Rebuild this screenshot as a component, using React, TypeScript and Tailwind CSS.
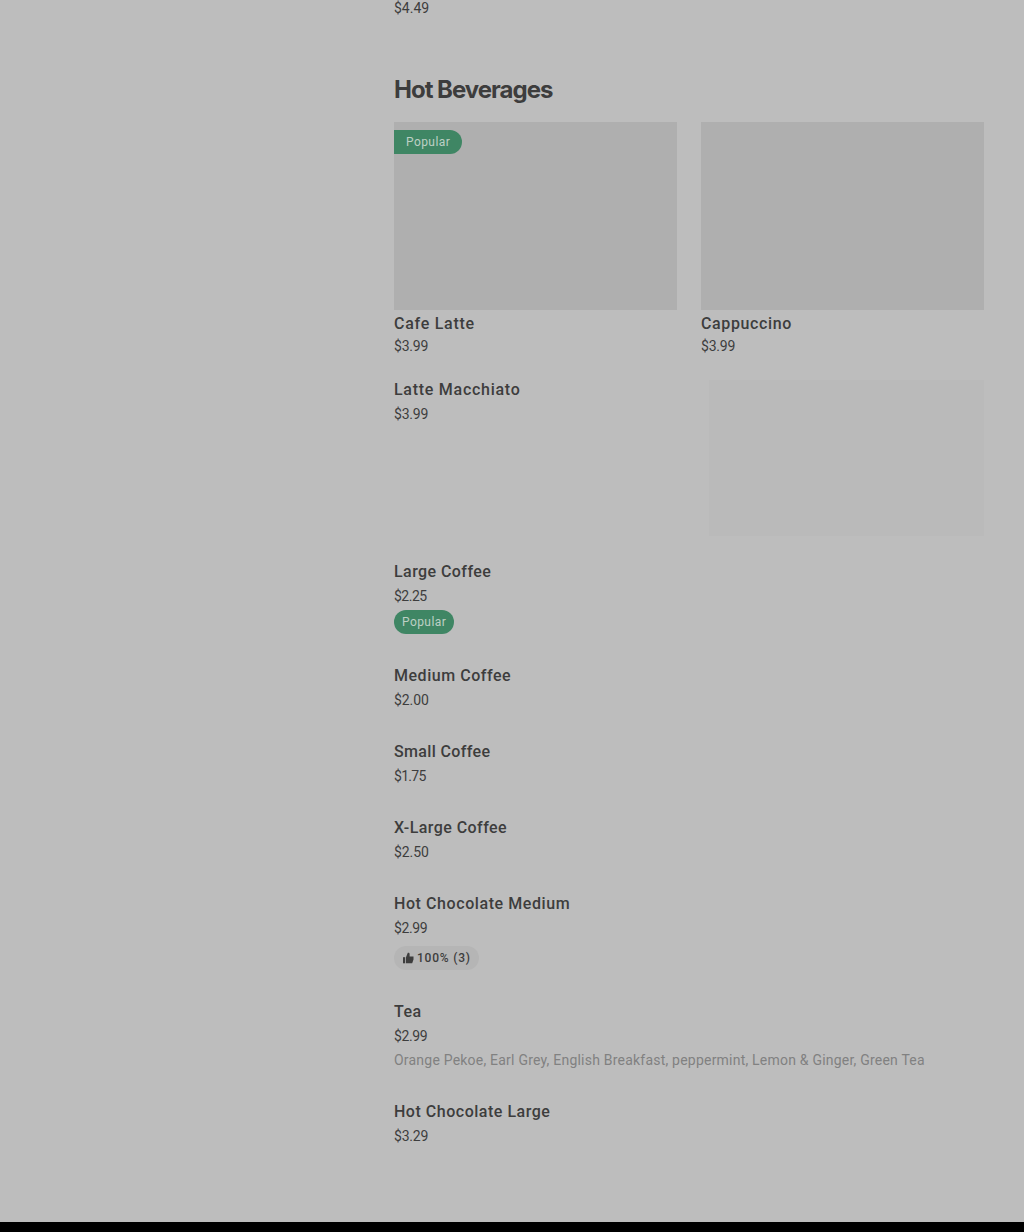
const drinks = [
  {
    name: "Cafe Latte",
    price: "$3.99",
    popular: true,
    nameClass: "tracking-[0.72px]",
  },
  {
    name: "Cappuccino",
    price: "$3.99",
    popular: false,
    nameClass: "tracking-[0.63px]",
  },
];

const items = [
  {
    name: "Large Coffee",
    price: "$2.25",
    popular: true,
    rowClass: "h-[104px]",
    nameClass: "tracking-[0.43px]",
    priceClass: "tracking-[-0.5px]",
  },
  {
    name: "Medium Coffee",
    price: "$2.00",
    rowClass: "h-[76px]",
    nameClass: "tracking-[0.53px]",
    priceClass: "tracking-[-0.1px]",
  },
  {
    name: "Small Coffee",
    price: "$1.75",
    rowClass: "h-[76px]",
    nameClass: "tracking-[0.35px]",
    priceClass: "tracking-[-0.7px]",
  },
  {
    name: "X-Large Coffee",
    price: "$2.50",
    rowClass: "h-[76px]",
    nameClass: "tracking-[0.43px]",
    priceClass: "tracking-[-0.1px]",
  },
  {
    name: "Hot Chocolate Medium",
    price: "$2.99",
    rating: "100% (3)",
    rowClass: "h-[108px]",
    nameClass: "tracking-[0.58px]",
    priceClass: "tracking-[-0.4px]",
  },
  {
    name: "Tea",
    price: "$2.99",
    description:
      "Orange Pekoe, Earl Grey, English Breakfast, peppermint, Lemon & Ginger, Green Tea",
    rowClass: "h-[100px]",
    nameClass: "tracking-[0.43px]",
    priceClass: "tracking-[-0.4px]",
  },
  {
    name: "Hot Chocolate Large",
    price: "$3.29",
    rowClass: "h-12",
    nameClass: "tracking-[0.52px]",
    priceClass: "tracking-[-0.2px]",
  },
];

function Name({ children, className }: { children: string; className: string }) {
  return (
    <h3 className={`text-base leading-6 font-medium ${className}`}>
      {children}
    </h3>
  );
}

function ThumbIcon() {
  return (
    <svg width="12" height="12" viewBox="0 0 12 12" fill="currentColor">
      <path d="M1 5.2h2.2v6.1H1z" />
      <path d="M4 11.3V5.2L5.8 0.8h0.5c0.8 0 1.3 0.5 1.3 1.2v2.5h3.9v3.1l-1.3 3.7z" />
    </svg>
  );
}

export default function App() {
  return (
    <div className="flex h-[1232px] flex-col overflow-hidden bg-[#bdbdbd] font-['Roboto',sans-serif] text-[#3d3d3d]">
      <main className="ml-[394px] h-[1222px] w-[590px] shrink-0">
        <p className="h-[74px] text-sm leading-4">$4.49</p>
        <h2 className="h-12 font-['Inter',sans-serif] text-2xl leading-8 font-bold tracking-[-1px]">
          Hot Beverages
        </h2>

        <div className="grid h-64 grid-cols-2 gap-6">
          {drinks.map((drink) => (
            <div key={drink.name}>
              <div className="h-[188px] bg-[#afafaf] pt-2">
                {drink.popular && (
                  <span className="flex h-6 w-[68px] items-center rounded-r-full bg-[#3f8664] pl-3 text-xs tracking-[0.43px] text-[#bdd0c5]">
                    Popular
                  </span>
                )}
              </div>
              <div className="pt-0.5">
                <Name className={drink.nameClass}>{drink.name}</Name>
                <p className="text-sm leading-5 tracking-[-0.2px]">
                  {drink.price}
                </p>
              </div>
            </div>
          ))}
        </div>

        <div className="flex h-[182px] justify-between">
          <div>
            <Name className="tracking-[0.73px]">Latte Macchiato</Name>
            <p className="text-sm leading-6 tracking-[-0.2px]">$3.99</p>
          </div>
          <div className="mt-0.5 h-[156px] w-[275px] bg-[#bababa]" />
        </div>

        {items.map((item) => (
          <div key={item.name} className={item.rowClass}>
            <Name className={item.nameClass}>{item.name}</Name>
            <p className={`text-sm leading-6 ${item.priceClass}`}>
              {item.price}
            </p>
            {item.popular && (
              <span className="mt-0.5 flex h-6 w-[60px] items-center rounded-full bg-[#3f8664] pl-2 text-xs tracking-[0.43px] text-[#bdd0c5]">
                Popular
              </span>
            )}
            {item.rating && (
              <span className="mt-1.5 flex h-6 w-[85px] items-center gap-[3px] rounded-full bg-[#b5b5b5] pl-2 text-xs font-medium tracking-[0.8px]">
                <ThumbIcon />
                {item.rating}
              </span>
            )}
            {item.description && (
              <p className="text-sm leading-6 tracking-[0.215px] whitespace-nowrap text-[#818181]">
                {item.description}
              </p>
            )}
          </div>
        ))}
      </main>
      <footer className="h-2.5 shrink-0 bg-black" />
    </div>
  );
}
